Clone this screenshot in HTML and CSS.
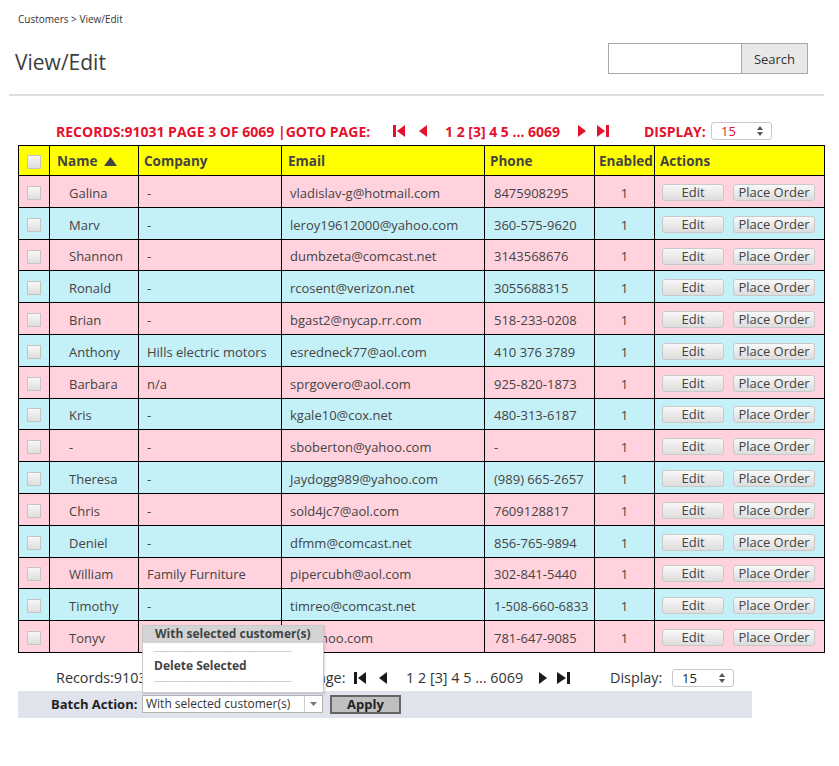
FILE: index.html
```html
<!DOCTYPE html>
<html>
<head>
<meta charset="utf-8">
<title>View/Edit</title>
<link rel="stylesheet" href="styles.css">
</head>
<body>
<div class="page">
  <div class="crumb">Customers &gt; View/Edit</div>
  <div class="titlebar">
    <h1 class="title">View/Edit</h1>
    <div class="search"><input class="search-input" type="text"><button class="search-btn">Search</button></div>
  </div>
  <div class="divider"></div>

  <div class="pager pager-top">
    <span class="pager-info">RECORDS:91031 PAGE 3 OF 6069 |GOTO PAGE:</span>
    <svg class="ico ico-first" width="12" height="12" viewBox="0 0 12 12"><rect x="0" y="0" width="3" height="12"/><polygon points="12,0 4,6 12,12"/></svg>
    <svg class="ico ico-prev" width="9" height="12" viewBox="0 0 9 12"><polygon points="9,0 1,6 9,12"/></svg>
    <span class="pages">1 2 [3] 4 5 ... 6069</span>
    <svg class="ico ico-next" width="9" height="12" viewBox="0 0 9 12"><polygon points="0,0 8,6 0,12"/></svg>
    <svg class="ico ico-last" width="12" height="12" viewBox="0 0 12 12"><polygon points="0,0 8,6 0,12"/><rect x="9" y="0" width="3" height="12"/></svg>
    <span class="display-label">DISPLAY:</span>
    <span class="spin"><span class="spin-val">15</span><svg class="spin-arrows" width="6" height="10" viewBox="0 0 6 10"><polygon points="3,0 6,4 0,4"/><polygon points="0,6 6,6 3,10"/></svg></span>
  </div>

  <table class="grid">
    <colgroup>
      <col class="c-check"><col class="c-name"><col class="c-company"><col class="c-email"><col class="c-phone"><col class="c-enabled"><col class="c-actions">
    </colgroup>
    <thead>
      <tr>
        <th class="cb-cell"><span class="cb"></span></th>
        <th class="h-name">Name <svg class="sort" width="13" height="9" viewBox="0 0 13 9"><polygon points="6.5,0 13,9 0,9"/></svg></th>
        <th class="h-company">Company</th>
        <th class="h-email">Email</th>
        <th class="h-phone">Phone</th>
        <th class="h-enabled">Enabled</th>
        <th class="h-actions">Actions</th>
      </tr>
    </thead>
    <tbody>
      <tr class="pink"><td class="cb-cell"><span class="cb"></span></td><td class="name">Galina</td><td class="company">-</td><td class="email">vladislav-g@hotmail.com</td><td class="phone">8475908295</td><td class="enabled">1</td><td class="actions"><button class="btn btn-edit">Edit</button><button class="btn btn-order">Place Order</button></td></tr>
      <tr class="blue"><td class="cb-cell"><span class="cb"></span></td><td class="name">Marv</td><td class="company">-</td><td class="email">leroy19612000@yahoo.com</td><td class="phone">360-575-9620</td><td class="enabled">1</td><td class="actions"><button class="btn btn-edit">Edit</button><button class="btn btn-order">Place Order</button></td></tr>
      <tr class="pink"><td class="cb-cell"><span class="cb"></span></td><td class="name">Shannon</td><td class="company">-</td><td class="email">dumbzeta@comcast.net</td><td class="phone">3143568676</td><td class="enabled">1</td><td class="actions"><button class="btn btn-edit">Edit</button><button class="btn btn-order">Place Order</button></td></tr>
      <tr class="blue"><td class="cb-cell"><span class="cb"></span></td><td class="name">Ronald</td><td class="company">-</td><td class="email">rcosent@verizon.net</td><td class="phone">3055688315</td><td class="enabled">1</td><td class="actions"><button class="btn btn-edit">Edit</button><button class="btn btn-order">Place Order</button></td></tr>
      <tr class="pink"><td class="cb-cell"><span class="cb"></span></td><td class="name">Brian</td><td class="company">-</td><td class="email">bgast2@nycap.rr.com</td><td class="phone">518-233-0208</td><td class="enabled">1</td><td class="actions"><button class="btn btn-edit">Edit</button><button class="btn btn-order">Place Order</button></td></tr>
      <tr class="blue"><td class="cb-cell"><span class="cb"></span></td><td class="name">Anthony</td><td class="company">Hills electric motors</td><td class="email">esredneck77@aol.com</td><td class="phone">410 376 3789</td><td class="enabled">1</td><td class="actions"><button class="btn btn-edit">Edit</button><button class="btn btn-order">Place Order</button></td></tr>
      <tr class="pink"><td class="cb-cell"><span class="cb"></span></td><td class="name">Barbara</td><td class="company">n/a</td><td class="email">sprgovero@aol.com</td><td class="phone">925-820-1873</td><td class="enabled">1</td><td class="actions"><button class="btn btn-edit">Edit</button><button class="btn btn-order">Place Order</button></td></tr>
      <tr class="blue"><td class="cb-cell"><span class="cb"></span></td><td class="name">Kris</td><td class="company">-</td><td class="email">kgale10@cox.net</td><td class="phone">480-313-6187</td><td class="enabled">1</td><td class="actions"><button class="btn btn-edit">Edit</button><button class="btn btn-order">Place Order</button></td></tr>
      <tr class="pink"><td class="cb-cell"><span class="cb"></span></td><td class="name">-</td><td class="company">-</td><td class="email">sboberton@yahoo.com</td><td class="phone">-</td><td class="enabled">1</td><td class="actions"><button class="btn btn-edit">Edit</button><button class="btn btn-order">Place Order</button></td></tr>
      <tr class="blue"><td class="cb-cell"><span class="cb"></span></td><td class="name">Theresa</td><td class="company">-</td><td class="email">Jaydogg989@yahoo.com</td><td class="phone">(989) 665-2657</td><td class="enabled">1</td><td class="actions"><button class="btn btn-edit">Edit</button><button class="btn btn-order">Place Order</button></td></tr>
      <tr class="pink"><td class="cb-cell"><span class="cb"></span></td><td class="name">Chris</td><td class="company">-</td><td class="email">sold4jc7@aol.com</td><td class="phone">7609128817</td><td class="enabled">1</td><td class="actions"><button class="btn btn-edit">Edit</button><button class="btn btn-order">Place Order</button></td></tr>
      <tr class="blue"><td class="cb-cell"><span class="cb"></span></td><td class="name">Deniel</td><td class="company">-</td><td class="email">dfmm@comcast.net</td><td class="phone">856-765-9894</td><td class="enabled">1</td><td class="actions"><button class="btn btn-edit">Edit</button><button class="btn btn-order">Place Order</button></td></tr>
      <tr class="pink"><td class="cb-cell"><span class="cb"></span></td><td class="name">William</td><td class="company">Family Furniture</td><td class="email">pipercubh@aol.com</td><td class="phone">302-841-5440</td><td class="enabled">1</td><td class="actions"><button class="btn btn-edit">Edit</button><button class="btn btn-order">Place Order</button></td></tr>
      <tr class="blue"><td class="cb-cell"><span class="cb"></span></td><td class="name">Timothy</td><td class="company">-</td><td class="email">timreo@comcast.net</td><td class="phone">1-508-660-6833</td><td class="enabled">1</td><td class="actions"><button class="btn btn-edit">Edit</button><button class="btn btn-order">Place Order</button></td></tr>
      <tr class="pink last"><td class="cb-cell"><span class="cb"></span></td><td class="name">Tonyv</td><td class="company">-</td><td class="email">t@yahoo.com</td><td class="phone">781-647-9085</td><td class="enabled">1</td><td class="actions"><button class="btn btn-edit">Edit</button><button class="btn btn-order">Place Order</button></td></tr>
    </tbody>
  </table>

  <div class="pager pager-bottom">
    <span class="pager-info">Records:91031 Page 3 of 6069 | Goto Page:</span>
    <svg class="ico ico-first" width="12" height="12" viewBox="0 0 12 12"><rect x="0" y="0" width="3" height="12"/><polygon points="12,0 4,6 12,12"/></svg>
    <svg class="ico ico-prev" width="9" height="12" viewBox="0 0 9 12"><polygon points="9,0 1,6 9,12"/></svg>
    <span class="pages">1 2 [3] 4 5 ... 6069</span>
    <svg class="ico ico-next" width="9" height="12" viewBox="0 0 9 12"><polygon points="0,0 8,6 0,12"/></svg>
    <svg class="ico ico-last" width="13" height="12" viewBox="0 0 13 12"><polygon points="0,0 9,6 0,12"/><rect x="10" y="0" width="3" height="12"/></svg>
    <span class="display-label">Display:</span>
    <span class="spin"><span class="spin-val">15</span><svg class="spin-arrows" width="6" height="10" viewBox="0 0 6 10"><polygon points="3,0 6,4 0,4"/><polygon points="0,6 6,6 3,10"/></svg></span>
  </div>

  <div class="batch">
    <span class="batch-label">Batch Action:</span>
    <span class="combo">
      <span class="combo-val">With selected customer(s)</span>
      <span class="combo-btn"><svg width="7" height="4" viewBox="0 0 7 4"><polygon points="0,0 7,0 3.5,4"/></svg></span>
      <span class="dropdown">
        <span class="opt opt-selected">With selected customer(s)</span>
        <span class="opt opt-dash">--------------------------------------------------------</span>
        <span class="opt opt-bold">Delete Selected</span>
        <span class="opt opt-dash">--------------------------------------------------------</span>
      </span>
    </span>
    <button class="apply">Apply</button>
  </div>
</div>
</body>
</html>
```

FILE: styles.css
```css
* { box-sizing: border-box; }
body {
  margin: 0;
  font-family: "Open Sans", "DejaVu Sans", sans-serif;
  color: #444;
  background: #fff;
}
.page { padding: 12px 15px 0 9px; }

.crumb {
  font-size: 10px;
  line-height: 14px;
  color: #333;
  margin-left: 9px;
}
.titlebar {
  display: flex;
  justify-content: space-between;
  align-items: flex-start;
  margin-top: 17px;
}
.title {
  margin: 5px 0 -3px 6px;
  font-size: 21px;
  line-height: 29px;
  font-weight: 400;
  color: #3d3d3d;
}
.search { display: flex; margin-right: 16px; }
.search-input {
  width: 133px;
  height: 31px;
  margin: 0;
  border: 1px solid #a9a9a9;
  border-right: none;
  background: #fff;
}
.search-btn {
  width: 67px;
  height: 31px;
  margin: 0;
  border: 1px solid #a9a9a9;
  background: #e8e8e8;
  font-family: "Open Sans", sans-serif;
  font-size: 13px;
  color: #333;
}
.divider {
  height: 2px;
  background: #dedede;
  margin-top: 20px;
}

/* pagers */
.pager {
  display: flex;
  align-items: center;
  height: 20px;
  padding-left: 47px;
  white-space: nowrap;
}
.pager-top {
  margin-top: 25px;
  color: #e5112d;
  font-weight: 700;
  font-size: 14px;
}
.pager-top .ico { fill: #e5112d; }
.pager-top .pager-info { width: 317px; }
.pager-top .ico-first { margin-left: 20px; }
.pager-top .ico-prev { margin-left: 13px; }
.pager-top .pages { margin-left: 18px; width: 118px; }
.pager-top .ico-next { margin-left: 15px; }
.pager-top .ico-last { margin-left: 10px; }
.pager-top .display-label { margin-left: 35px; width: 63px; }
.pager-top .spin { margin-left: 4px; width: 61px; }
.pager-top .spin-val { color: #e5112d; font-weight: 400; }

.pager-bottom {
  margin-top: 15px;
  color: #333;
  font-size: 14.4px;
}
.pager-bottom .ico { fill: #1a1a1a; }
.pager-bottom .pager-info { width: 289px; }
.pager-bottom .ico-first { margin-left: 9px; }
.pager-bottom .ico-prev { margin-left: 12px; }
.pager-bottom .pages { margin-left: 19px; width: 118px; }
.pager-bottom .ico-next { margin-left: 15px; }
.pager-bottom .ico-last { margin-left: 9px; }
.pager-bottom .display-label { margin-left: 40px; width: 53px; }
.pager-bottom .spin { margin-left: 9px; width: 62px; }
.pager-bottom .spin-val { color: #222; }

.spin {
  display: flex;
  align-items: center;
  justify-content: space-between;
  height: 18px;
  padding: 0 8px 0 9px;
  border: 1px solid #c8c8c8;
  border-radius: 3px;
  background: #fff;
  font-size: 13px;
}
.spin-arrows { fill: #555; }

/* table */
.grid {
  border-collapse: collapse;
  table-layout: fixed;
  width: 806px;
  margin: 4px 0 0 9px;
  font-size: 13px;
  color: #444;
}
.c-check { width: 31px; }
.c-name { width: 89px; }
.c-company { width: 143px; }
.c-email { width: 203px; }
.c-phone { width: 110px; }
.c-enabled { width: 60px; }
.c-actions { width: 170px; }
.grid th, .grid td {
  border: 1px solid #000;
  padding: 0;
  white-space: nowrap;
  overflow: hidden;
}
.grid thead tr { height: 30px; background: #ffff00; }
.grid th {
  text-align: left;
  font-weight: 700;
  font-size: 13.5px;
  color: #444;
}
.grid tbody tr { height: 31.8px; }
.grid tbody td { padding-top: 3px; }
.grid tbody td.actions, .grid tbody td.cb-cell { padding-top: 0; }
.pink { background: #ffd2de; }
.blue { background: #c4f0f8; }

.grid .cb-cell { text-align: center; }
.cb {
  display: inline-block;
  width: 14px;
  height: 14px;
  vertical-align: middle;
  border: 1px solid #c4c4c4;
  background: linear-gradient(#f7f7f7, #dedede);
}
.h-name { padding-left: 7px !important; }
.sort { fill: #444; margin-left: 3px; vertical-align: 0; }
.h-company { padding-left: 5px !important; }
.h-email { padding-left: 6px !important; }
.h-phone { padding-left: 5px !important; }
.h-enabled { padding-left: 4px !important; }
.h-actions { padding-left: 5px !important; }
.name { padding-left: 19px !important; }
.company { padding-left: 8px !important; }
.email { padding-left: 8px !important; }
.phone { padding-left: 9px !important; }
.enabled { text-align: center; }
.actions { padding-left: 7px !important; }

.btn {
  height: 17px;
  padding: 0;
  margin: 0;
  border: 1px solid #c9c9c9;
  border-radius: 3px;
  background: linear-gradient(#f8f8f8, #dddddd);
  font-family: "Open Sans", sans-serif;
  font-size: 13px;
  line-height: 15px;
  color: #444;
  vertical-align: middle;
}
.btn-edit { width: 62px; }
.btn-order { width: 82px; margin-left: 9px; }

/* batch bar */
.batch {
  display: flex;
  align-items: center;
  width: 734px;
  height: 27px;
  margin: 3px 0 0 9px;
  background: #e0e3ec;
  padding-left: 33px;
}
.batch-label {
  font-weight: 700;
  font-size: 13px;
  color: #222;
  width: 91px;
}
.combo {
  position: relative;
  display: flex;
  width: 181px;
  height: 18px;
  border: 1px solid #b5b5b5;
  background: #fff;
}
.combo-val {
  flex: 1;
  font-size: 12px;
  line-height: 16px;
  padding-left: 3px;
  color: #333;
}
.combo-btn {
  width: 18px;
  border-left: 1px solid #cfcfcf;
  display: flex;
  align-items: center;
  justify-content: center;
  fill: #777;
}
.dropdown {
  position: absolute;
  left: -1px;
  bottom: calc(100% + 3px);
  width: 182px;
  height: 68px;
  display: flex;
  flex-direction: column;
  border: 1px solid #c8c8c8;
  background: #fff;
  box-shadow: 1px 1px 2px rgba(0,0,0,0.15);
  overflow: hidden;
}
.opt {
  display: block;
  flex: none;
  padding-left: 11px;
  white-space: nowrap;
  overflow: hidden;
  font-size: 12px;
  font-weight: 700;
  color: #444;
}
.opt-selected {
  background: #d3d3d3;
  height: 17px;
  line-height: 16px;
  padding-left: 12px;
}
.opt-dash {
  font-weight: 400;
  font-size: 7px;
  line-height: 16px;
  height: 16px;
  letter-spacing: 0.2px;
  color: #8a8a8a;
  margin-right: 12px;
}
.opt-bold { height: 14px; line-height: 14px; overflow: visible; }
.apply {
  width: 71px;
  height: 19px;
  margin: 0 0 0 7px;
  padding: 0;
  border: 2px solid #666;
  background: #c0c0c0;
  font-family: "Open Sans", sans-serif;
  font-weight: 700;
  font-size: 13px;
  line-height: 14px;
  color: #222;
}
```
